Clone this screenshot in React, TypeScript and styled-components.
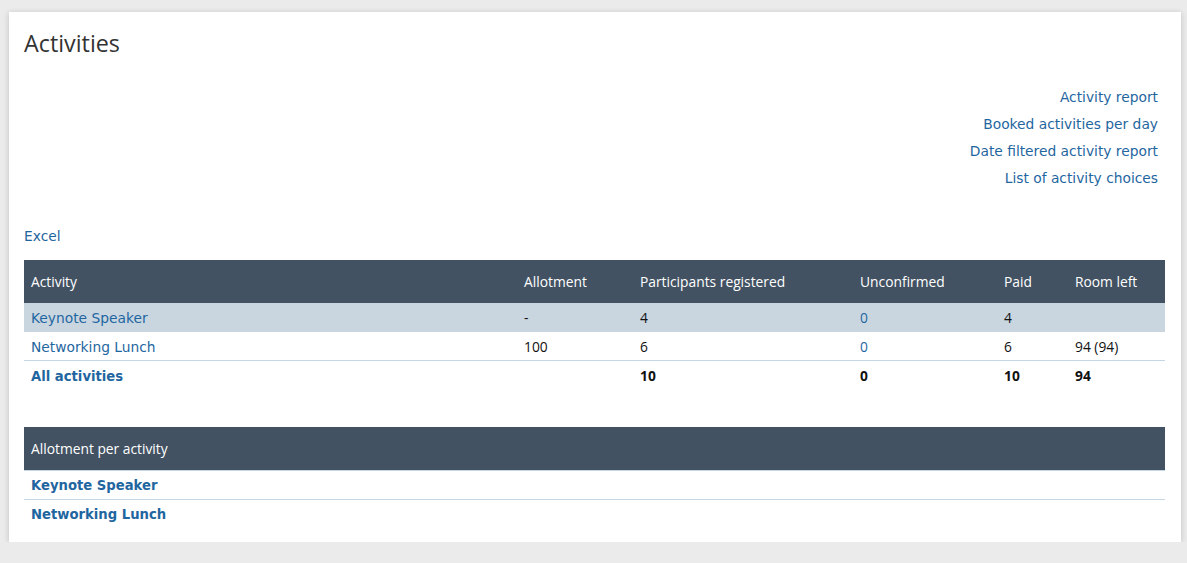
import React from 'react';
import styled, { createGlobalStyle } from 'styled-components';

const GlobalStyle = createGlobalStyle`
  html, body {
    margin: 0;
    padding: 0;
    background: #ebebeb;
  }
`;

const activities = [
  { name: 'Keynote Speaker', allotment: '-', registered: '4', unconfirmed: '0', paid: '4', left: '' },
  { name: 'Networking Lunch', allotment: '100', registered: '6', unconfirmed: '0', paid: '6', left: '94 (94)' },
];

const reportLinks = [
  'Activity report',
  'Booked activities per day',
  'Date filtered activity report',
  'List of activity choices',
];

const colWidths = [493, 116, 220, 144, 71, 97];

const App = () => (
  <>
    <GlobalStyle />
    <Card>
      <Title>Activities</Title>
      <ReportLinks>
        {reportLinks.map((l) => (
          <Link key={l} href="#">
            {l}
          </Link>
        ))}
      </ReportLinks>
      <ExcelRow>
        <Link href="#">Excel</Link>
      </ExcelRow>
      <Table>
        <colgroup>
          {colWidths.map((w, i) => (
            <col key={i} style={{ width: w }} />
          ))}
        </colgroup>
        <thead>
          <tr>
            <Th>Activity</Th>
            <Th>Allotment</Th>
            <Th>Participants registered</Th>
            <Th>Unconfirmed</Th>
            <Th>Paid</Th>
            <Th>Room left</Th>
          </tr>
        </thead>
        <tbody>
          {activities.map((a, idx) => (
            <Row key={a.name} $highlight={idx === 0}>
              <Td $tall={idx === 0}>
                <Link href="#">{a.name}</Link>
              </Td>
              <Td>{a.allotment}</Td>
              <Td>{a.registered}</Td>
              <Td>
                <NumLink href="#">{a.unconfirmed}</NumLink>
              </Td>
              <Td>{a.paid}</Td>
              <Td>{a.left}</Td>
            </Row>
          ))}
          <Row $last>
            <Td>
              <BoldLink href="#">All activities</BoldLink>
            </Td>
            <Td />
            <Td $bold>10</Td>
            <Td $bold>0</Td>
            <Td $bold>10</Td>
            <Td $bold>94</Td>
          </Row>
        </tbody>
      </Table>

      <AllotmentTable>
        <thead>
          <tr>
            <Th>Allotment per activity</Th>
          </tr>
        </thead>
        <tbody>
          {activities.map((a, idx) => (
            <AllotRow key={a.name} $last={idx === activities.length - 1}>
              <Td>
                <BoldLink href="#">{a.name}</BoldLink>
              </Td>
            </AllotRow>
          ))}
        </tbody>
      </AllotmentTable>
    </Card>
  </>
);

const Card = styled.div`
  margin: 12px 6px 0 9px;
  background: #ffffff;
  box-shadow: 0 1px 6px rgba(0, 0, 0, 0.18);
  padding: 19px 16px 15px 15px;
  box-sizing: border-box;
  height: 530px;
`;

const Title = styled.h1`
  margin: 0;
  font-family: 'Open Sans', sans-serif;
  font-weight: 400;
  font-size: 23.3px;
  line-height: 24px;
  color: #333333;
`;

const ReportLinks = styled.div`
  display: flex;
  flex-direction: column;
  align-items: flex-end;
  margin-top: 29px;
  margin-right: 7px;
  a {
    line-height: 27px;
  }
`;

const ExcelRow = styled.div`
  margin-top: 34px;
  height: 20px;
  line-height: 20px;
  margin-bottom: 14px;
`;

const Link = styled.a`
  font-family: 'DejaVu Sans', Verdana, sans-serif;
  font-size: 13.8px;
  color: #1f66a0;
  text-decoration: none;
`;

const BoldLink = styled(Link)`
  font-weight: 700;
  font-size: 13.2px;
`;

const NumLink = styled.a`
  font-family: 'Open Sans', sans-serif;
  font-size: 13.8px;
  color: #1f66a0;
  text-decoration: none;
`;

const Table = styled.table`
  width: 100%;
  table-layout: fixed;
  border-collapse: collapse;
  font-family: 'Open Sans', sans-serif;
  font-size: 13.8px;
`;

const AllotmentTable = styled(Table)`
  margin-top: 38px;
  thead tr {
    border-bottom: 1px solid #c5d6e4;
  }
`;

const Th = styled.th`
  background: #425262;
  color: #ffffff;
  font-weight: 400;
  text-align: left;
  height: 43px;
  padding: 0 7px;
  box-sizing: border-box;
  white-space: nowrap;
`;

const Row = styled.tr<{ $highlight?: boolean; $last?: boolean }>`
  background: ${({ $highlight }) => ($highlight ? '#c9d6e0' : 'transparent')};
  border-bottom: ${({ $highlight, $last }) =>
    $highlight || $last ? 'none' : '1px solid #c5d6e4'};
`;

const AllotRow = styled.tr<{ $last?: boolean }>`
  border-bottom: ${({ $last }) => ($last ? 'none' : '1px solid #c5d6e4')};
`;

const Td = styled.td<{ $bold?: boolean; $tall?: boolean }>`
  height: ${({ $tall }) => ($tall ? 29 : 28)}px;
  padding: 0 7px;
  color: #111111;
  font-weight: ${({ $bold }) => ($bold ? 700 : 400)};
  white-space: nowrap;
  vertical-align: middle;
`;

export default App;
